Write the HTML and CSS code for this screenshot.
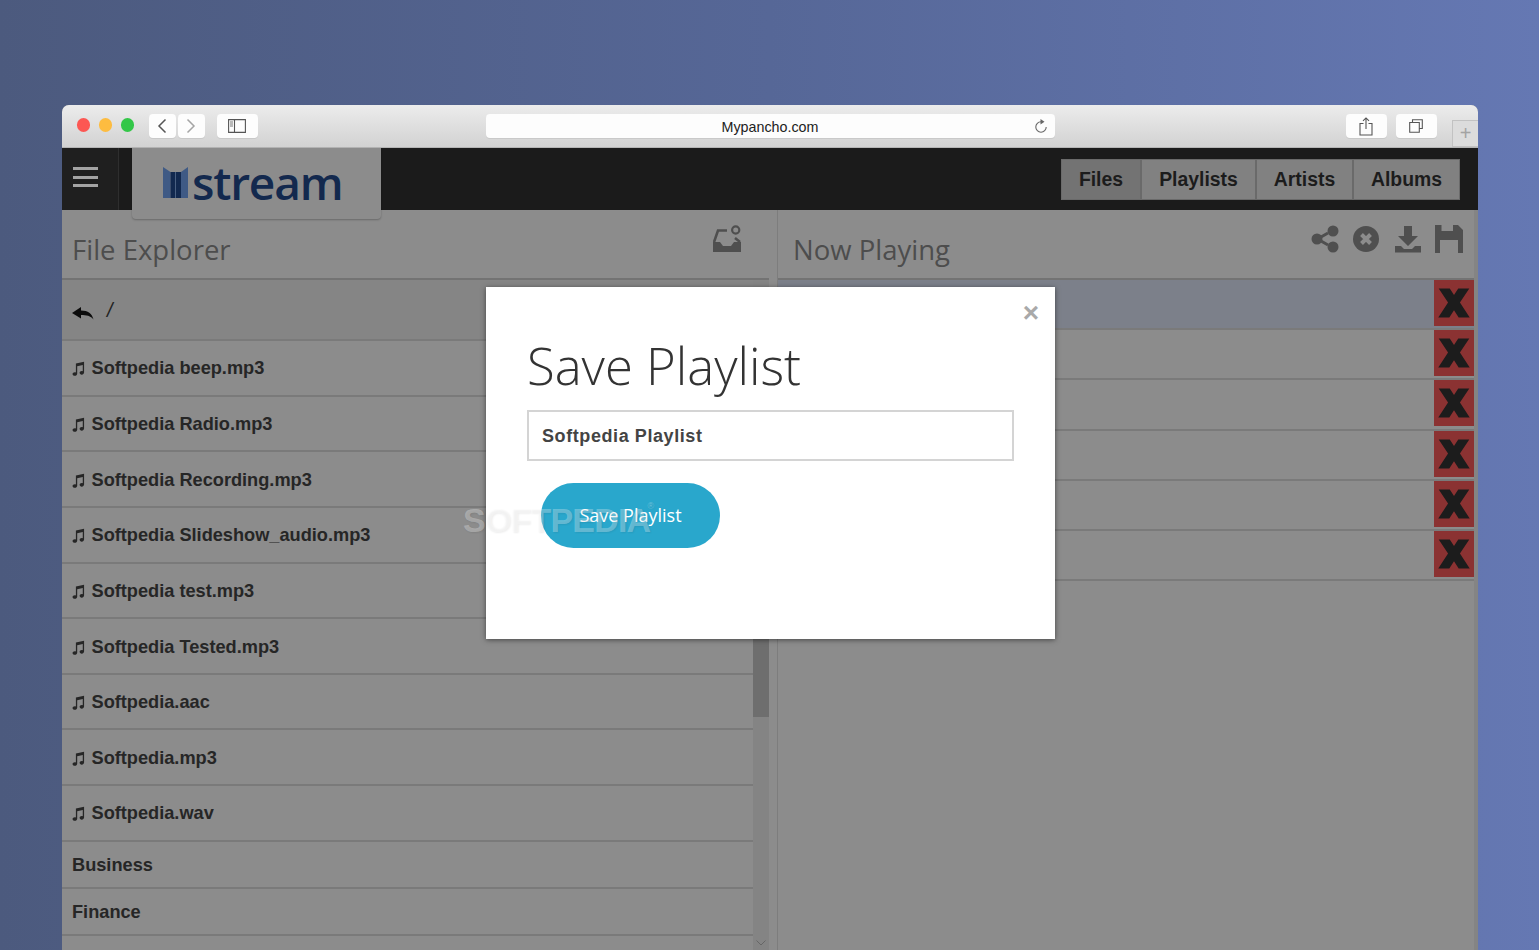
FILE: index.html
```html
<!DOCTYPE html>
<html lang="en">
<head>
<meta charset="utf-8">
<title>mStream - Save Playlist</title>
<link rel="stylesheet" href="styles.css">
</head>
<body>
<svg class="defs" width="0" height="0" aria-hidden="true">
  <symbol id="note" viewBox="0 0 14 16"><path d="M4.200 2.600 13 .6V12.400c0 1.300-1.200 2.200-2.500 2.200S8.200 13.900 8.200 12.700s1.100-2 2.300-2c.4 0 .8.100 1.100.2V4.300L5.600 5.600V13.700c0 1.300-1.200 2.200-2.600 2.200S.6 15.200.6 14s1.100-2 2.400-2c.4 0 .8.100 1.200.2z"/></symbol>
  <symbol id="closex" viewBox="0 0 40 46"><path d="M2 6h13l5 7.500L25 6h13L27 22.500 38.500 40H25.500L20 31.500 14.500 40H1.500L13 22.500z"/></symbol>
</svg>
<div class="window">
  <div class="toolbar">
    <div class="lights"><span class="light red"></span><span class="light amber"></span><span class="light green"></span></div>
    <div class="navpair">
      <span class="tbtn small"><svg width="12" height="16" viewBox="0 0 12 16"><path d="M9.500 1.500 3 8l6.500 6.500" fill="none" stroke="#555" stroke-width="1.500"/></svg></span>
      <span class="tbtn small"><svg width="12" height="16" viewBox="0 0 12 16"><path d="M2.500 1.500 9 8l-6.500 6.500" fill="none" stroke="#a5a5a5" stroke-width="1.500"/></svg></span>
    </div>
    <span class="tbtn wide sidebar"><svg width="18" height="14" viewBox="0 0 18 14"><path d="M.6.6h16.800v12.800H.6zM6.500.6v12.800" fill="none" stroke="#555" stroke-width="1.100"/><path d="M2 3h3M2 5h3M2 7h3" stroke="#777"/></svg></span>
    <div class="address"><span class="url">Mypancho.com</span><svg class="reload" width="14" height="15" viewBox="0 0 14 15"><path d="M7 2.800a5.200 5.200 0 1 0 5.200 5.200" fill="none" stroke="#666" stroke-width="1.100"/><path d="M6.500 0v5.400L10.500 2.700z" fill="#666"/></svg></div>
    <span class="tbtn wide share"><svg width="14" height="19" viewBox="0 0 14 19"><path d="M4.500 6.500H1v11.500h12V6.500H9.500M7 12V1M4 3.800 7 .9l3 2.900" fill="none" stroke="#555" stroke-width="1.100"/></svg></span>
    <span class="tbtn wide tabs"><svg width="14" height="14" viewBox="0 0 14 14"><path d="M3.500 3.500V.7h9.800v8.800h-3M.7 3.500h9.600v9.800H.7z" fill="none" stroke="#555" stroke-width="1.100"/></svg></span>
    <span class="newtab">+</span>
  </div>

  <header class="appbar">
    <button class="burger" aria-label="Menu"><span></span><span></span><span></span></button>
    <div class="logo">
      <svg width="25" height="31" viewBox="0 0 25 31"><path d="M0 0 7.500 5V31H0z" fill="#3f5a85"/><path d="M7.500 5h4.800V31H7.500zM13 5h5V31h-5z" fill="#12294f"/><path d="M12.300 5h.7V31h-.7z" fill="#3f5a85"/><path d="M18 5 25 0V31H18z" fill="#3f5a85"/></svg>
      <span class="logotext">stream</span>
    </div>
    <nav class="tabsnav">
      <a class="navitem active w1">Files</a><a class="navitem w2">Playlists</a><a class="navitem w3">Artists</a><a class="navitem w4">Albums</a>
    </nav>
  </header>

  <main class="panes">
    <section class="pane left">
      <div class="panehead">
        <h2>File Explorer</h2>
        <svg class="newfolder" width="28" height="28" viewBox="0 0 28 28"><path d="M0 17H7l3 4h8l3-4h7V27H0z" fill="#4f4f4f"/><path d="M1 17 5 5.500H14M22 13l5 4" fill="none" stroke="#4f4f4f" stroke-width="2.600"/><circle cx="22.700" cy="5" r="3.600" fill="none" stroke="#4f4f4f" stroke-width="2.200"/></svg>
      </div>
      <div class="listwrap">
        <ul class="list">
          <li class="row back">
            <svg width="22" height="14" viewBox="0 0 22 14"><path d="M0 7 9 1v3.500c7 0 11 3 12.500 9C19 9.800 14 9 9 9v3.500z" fill="#0c0c0c"/></svg>
            <span class="slash">/</span>
          </li>
          <li class="row file"><svg class="note"><use href="#note"/></svg>Softpedia beep.mp3</li>
          <li class="row file"><svg class="note"><use href="#note"/></svg>Softpedia Radio.mp3</li>
          <li class="row file"><svg class="note"><use href="#note"/></svg>Softpedia Recording.mp3</li>
          <li class="row file"><svg class="note"><use href="#note"/></svg>Softpedia Slideshow_audio.mp3</li>
          <li class="row file"><svg class="note"><use href="#note"/></svg>Softpedia test.mp3</li>
          <li class="row file"><svg class="note"><use href="#note"/></svg>Softpedia Tested.mp3</li>
          <li class="row file"><svg class="note"><use href="#note"/></svg>Softpedia.aac</li>
          <li class="row file"><svg class="note"><use href="#note"/></svg>Softpedia.mp3</li>
          <li class="row file"><svg class="note"><use href="#note"/></svg>Softpedia.wav</li>
          <li class="row dir">Business</li>
          <li class="row dir">Finance</li>
        </ul>
        <div class="scrollbar">
          <span class="thumb"></span>
          <svg class="chev" width="10" height="6" viewBox="0 0 10 6"><path d="M.5.500 5 5 9.500.5" fill="none" stroke="#666"/></svg>
        </div>
      </div>
    </section>

    <section class="pane right">
      <div class="panehead">
        <h2>Now Playing</h2>
        <div class="actions">
          <svg width="28" height="28" viewBox="0 0 28 28"><path d="M10 12l7-4M10 16l7 4" stroke="#4f4f4f" stroke-width="3"/><circle cx="6" cy="14" r="5.500" fill="#4f4f4f"/><circle cx="22" cy="6" r="5.500" fill="#4f4f4f"/><circle cx="22" cy="22" r="5.500" fill="#4f4f4f"/></svg>
          <svg width="28" height="28" viewBox="0 0 28 28"><circle cx="14" cy="14" r="13" fill="#4f4f4f"/><path d="M9.500 9.500l9 9M18.500 9.500l-9 9" stroke="#8c8c8c" stroke-width="4"/></svg>
          <svg width="28" height="28" viewBox="0 0 28 28"><path d="M10 1h8v10h6L14 21 4 11h6zM1 21h6l3 3h8l3-3h6v6.500H1z" fill="#4f4f4f"/></svg>
          <svg width="28" height="28" viewBox="0 0 28 28"><path d="M0 0H6.500V6H18V0h5l5 5V28H23V15H5V28H0z" fill="#4f4f4f"/></svg>
        </div>
      </div>
      <ul class="queue">
        <li class="qrow current"><button class="del"><svg><use href="#closex"/></svg></button></li>
        <li class="qrow"><button class="del"><svg><use href="#closex"/></svg></button></li>
        <li class="qrow"><button class="del"><svg><use href="#closex"/></svg></button></li>
        <li class="qrow"><button class="del"><svg><use href="#closex"/></svg></button></li>
        <li class="qrow"><button class="del"><svg><use href="#closex"/></svg></button></li>
        <li class="qrow"><button class="del"><svg><use href="#closex"/></svg></button></li>
      </ul>
    </section>
  </main>

  <div class="modal">
    <span class="close">×</span>
    <h1>Save Playlist</h1>
    <div class="field">Softpedia Playlist</div>
    <button class="save">Save Playlist</button>
  </div>
</div>
<div class="watermark">SOFTPEDIA<sup>®</sup></div>
</body>
</html>
```

FILE: styles.css
```css
* { box-sizing: border-box; }
html, body { margin: 0; height: 950px; overflow: hidden; }
body {
  background: linear-gradient(90deg, #4c5a7e 0%, #566797 50%, #6578b3 100%);
  padding: 105px 61px 0 62px;
  font-family: "Liberation Sans", Arial, sans-serif;
  position: relative;
}
.defs { position: absolute; }
ul { list-style: none; margin: 0; padding: 0; }
h1, h2 { margin: 0; font-family: "Open Sans", sans-serif; }
button { border: 0; padding: 0; font: inherit; }

.window {
  position: relative;
  height: 845px;
  display: flex;
  flex-direction: column;
  border-radius: 7px 7px 0 0;
  overflow: hidden;
  background: #8c8c8c;
}

/* Safari chrome */
.toolbar {
  height: 43px;
  flex: none;
  display: flex;
  align-items: flex-start;
  padding-top: 9px;
  background: linear-gradient(#ececec, #d2d2d2);
  border-bottom: 1px solid #b5b5b5;
  position: relative;
}
.lights { display: flex; gap: 8.500px; margin: 4px 0 0 14.500px; }
.light { width: 13.500px; height: 13.500px; border-radius: 50%; }
.red { background: #fc5753; }
.amber { background: #fdbc40; }
.green { background: #33c748; }
.navpair { display: flex; gap: 2px; margin-left: 14.500px; }
.tbtn {
  height: 24px;
  background: #fdfdfd;
  border-radius: 4px;
  display: flex;
  align-items: center;
  justify-content: center;
  box-shadow: 0 1px 0 #c9c9c9;
}
.small { width: 27px; }
.wide { width: 41px; }
.sidebar { margin-left: 12px; }
.address {
  width: 569px;
  height: 24px;
  margin-left: 228px;
  background: #fdfdfd;
  border-radius: 4px;
  box-shadow: 0 1px 0 #c9c9c9;
  display: flex;
  align-items: center;
  justify-content: center;
  position: relative;
  font-size: 14.300px;
  color: #222;
}
.url { padding-top: 2px; }
.reload { position: absolute; right: 7px; top: 5px; }
.share { margin-left: 291px; }
.tabs { margin-left: 9px; }
.newtab {
  position: absolute;
  right: 0;
  top: 15px;
  width: 26px;
  height: 27px;
  background: #dcdcdc;
  border: 1px solid #c2c2c2;
  border-right: 0;
  color: #a3a3a3;
  font-size: 20px;
  line-height: 25px;
  text-align: center;
}

/* App header */
.appbar {
  height: 62px;
  flex: none;
  display: flex;
  background: #1b1b1b;
  position: relative;
  z-index: 1;
}
.burger {
  width: 57px;
  background: #1f1f1f;
  border-right: 1px solid #2e2e2e;
  display: flex;
  flex-direction: column;
  gap: 5.500px;
  padding: 19px 0 0 11px;
}
.burger span { display: block; width: 25px; height: 3px; background: #a3a3a3; }
.logo {
  width: 249px;
  height: 71px;
  margin-left: 13px;
  background: #8c8c8c;
  border-radius: 0 0 4px 4px;
  box-shadow: 0 1px 2px rgba(0,0,0,.25);
  display: flex;
  align-items: flex-start;
  padding: 19px 0 0 31px;
}
.logotext {
  font-family: "Open Sans", sans-serif;
  font-weight: 600;
  font-size: 46px;
  letter-spacing: -1.200px;
  line-height: 31px;
  color: #13294e;
  margin-left: 4px;
}
.tabsnav { margin: 11px 18px 0 auto; display: flex; height: 41px; }
.navitem {
  height: 41px;
  display: flex;
  align-items: center;
  justify-content: center;
  background: #818181;
  border: 1px solid #6a6a6a;
  color: #1c1c1c;
  font-weight: 700;
  font-size: 19.400px;
}
.navitem.active { background: #737373; }
.w1 { width: 80px; }
.w2 { width: 115px; }
.w3 { width: 97px; }
.w4 { width: 107px; }

/* Panes */
.panes { flex: 1; display: flex; min-height: 0; }
.pane { display: flex; flex-direction: column; min-height: 0; }
.left { width: 707px; flex: none; }
.right { flex: 1; margin-left: 8px; border-left: 1px solid #7d7d7d; border-right: 4px solid #848484; }
.panehead {
  height: 70px;
  flex: none;
  display: flex;
  justify-content: space-between;
  border-bottom: 2px solid #737373;
  position: relative;
}
.panehead h2 { font-size: 27.500px; font-weight: 400; color: #4d4d4d; line-height: 37px; margin-top: 21px; }
.left .panehead h2 { padding-left: 10px; }
.right .panehead h2 { padding-left: 15px; }
.newfolder { margin: 15px 28px 0 0; }
.actions { display: flex; gap: 13.500px; margin: 15px 11px 0 0; }

.listwrap { flex: 1; display: flex; min-height: 0; }
.list { flex: 1; overflow: hidden; }
.row {
  display: flex;
  align-items: center;
  padding-left: 10px;
  color: #262626;
  font-weight: 700;
  font-size: 18.200px;
  border-bottom: 2px solid #7a7a7a;
}
.back { height: 61px; background: #858585; gap: 13px; padding-top: 6px; }
.slash { font-weight: 400; font-size: 20px; color: #222; font-style: italic; margin-top: -4px; }
.file { height: 55.650px; padding-top: 2px; }
.dir { height: 47px; padding-top: 2px; }
.note { width: 13px; height: 15px; margin-right: 6.500px; fill: #262626; }
.scrollbar { width: 16px; flex: none; background: #848484; position: relative; }
.thumb { position: absolute; left: 0; right: 0; top: 280px; height: 157px; background: #6e6e6e; }
.chev { position: absolute; left: 3px; bottom: 4px; }

.queue { flex: 1; }
.qrow {
  height: 50.200px;
  border-bottom: 2px solid #7a7a7a;
  display: flex;
  justify-content: flex-end;
}
.current { background: #7c808a; }
.del {
  width: 40px;
  height: 46px;
  background: #8b3232;
  display: flex;
  align-items: center;
  justify-content: center;
}
.del svg { width: 34px; height: 40px; fill: #1c1c1c; }

/* Modal */
.modal {
  position: absolute;
  left: 424px;
  top: 182px;
  width: 569px;
  height: 352px;
  background: #fff;
  box-shadow: 0 1px 5px rgba(0,0,0,.5);
  padding: 46px 41px 0;
}
.modal h1 { font-weight: 300; font-size: 50.800px; line-height: 66px; color: #333; }
.close {
  position: absolute;
  right: 16px;
  top: 10px;
  font-weight: 700;
  font-size: 28px;
  line-height: 32px;
  color: #a9a9a9;
}
.field {
  height: 51px;
  margin-top: 11px;
  border: 2px solid #d4d4d4;
  display: flex;
  align-items: center;
  padding: 2px 0 0 13px;
  font-weight: 700;
  font-size: 18px;
  letter-spacing: .58px;
  color: #444;
}
.save {
  display: block;
  width: 179px;
  height: 65px;
  margin: 22px 0 0 14px;
  padding-bottom: 2px;
  border-radius: 33px;
  background: #29a7cc;
  color: #fff;
  font-family: "Open Sans", sans-serif;
  font-size: 18px;
}

.watermark {
  position: absolute;
  left: 463px;
  top: 500px;
  font-family: "Liberation Sans", sans-serif;
  font-weight: 700;
  font-size: 34px;
  letter-spacing: -.8px;
  line-height: 40px;
  color: rgba(255,255,255,.3);
  text-shadow: 1px 1px 2px rgba(0,0,0,.07);
  pointer-events: none;
}
.watermark sup { font-size: 9px; font-weight: 400; vertical-align: top; line-height: 12px; margin-left: -3px; }
```
